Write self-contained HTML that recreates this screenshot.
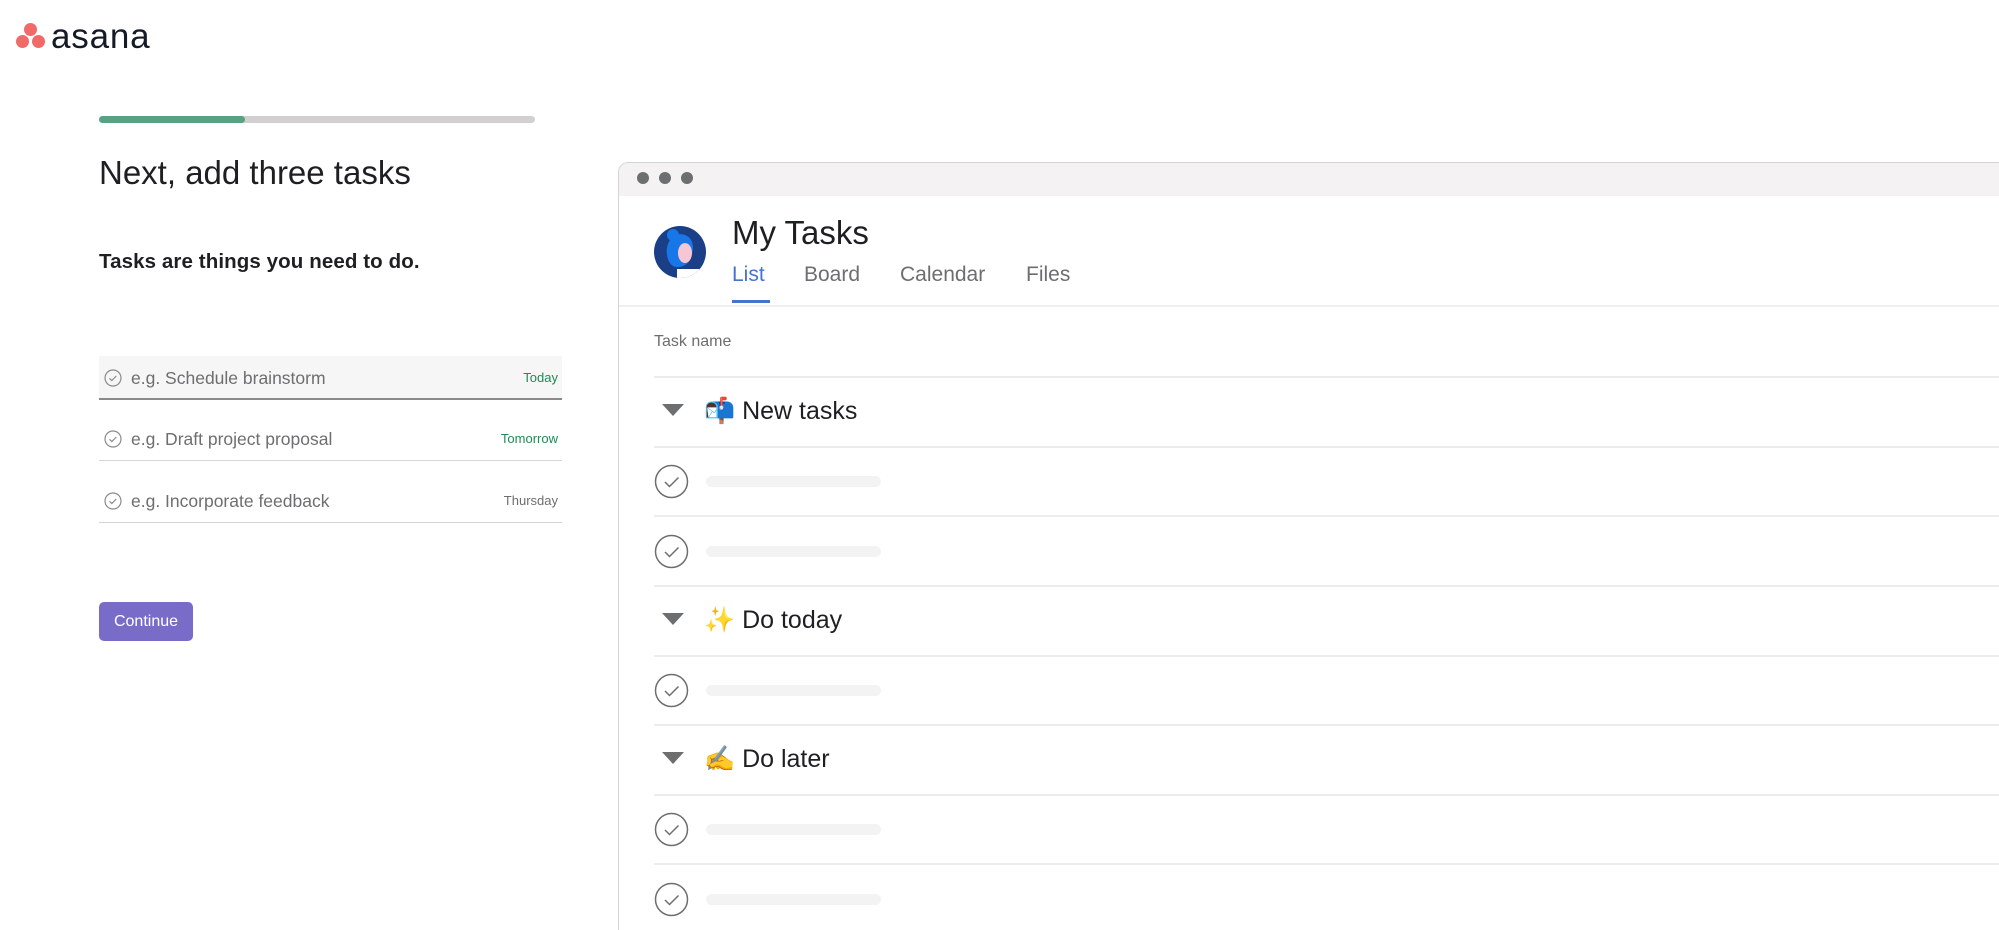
<!DOCTYPE html>
<html><head><meta charset="utf-8"><style>
*{margin:0;padding:0;box-sizing:border-box}
html,body{width:1999px;height:930px;overflow:hidden;background:#fff}
body{font-family:"Liberation Sans",sans-serif;color:#1e1f21}
#w{position:relative;width:1999px;height:930px;overflow:hidden}
.a{position:absolute}
.dot{position:absolute;width:13px;height:13px;border-radius:50%;background:#f06a6a}
.row{position:absolute;left:99px;width:463px;height:44px;border-bottom:1px solid #d5d5d5}
.row .t{position:absolute;left:32px;top:12px;font-size:17.5px;color:#6d6e6f}
.row .r{position:absolute;right:4px;top:14px;font-size:13px}
.row svg{position:absolute;left:5px;top:13px}
.hl{position:absolute;left:654px;right:0;height:2px;background:#ececec}
.sec{position:absolute;left:662px;font-size:25px;color:#1e1f21}
.tri{display:inline-block;width:0;height:0;border-left:11px solid transparent;border-right:11px solid transparent;border-top:12px solid #6d6e6f;vertical-align:middle;margin-right:20px;position:relative;top:-2px}
.chk{position:absolute;left:654px}
.ph{position:absolute;left:706px;width:175px;height:11px;border-radius:6px;background:#f3f3f3}
</style></head><body><div id="w">
<div class="dot" style="left:24px;top:23px"></div>
<div class="dot" style="left:16px;top:35px"></div>
<div class="dot" style="left:32px;top:35px"></div>
<div class="a" style="left:51px;top:17px;font-size:35px;letter-spacing:0.8px;color:#151b26">asana</div>

<div class="a" style="left:99px;top:116px;width:436px;height:7px;border-radius:4px;background:#d1cfcf"></div>
<div class="a" style="left:99px;top:116px;width:146px;height:7px;border-radius:4px;background:#58a182"></div>
<div class="a" style="left:99px;top:154px;font-size:33px;color:#1e1f21">Next, add three tasks</div>
<div class="a" style="left:99px;top:250px;font-size:20.5px;font-weight:bold;color:#1e1f21;letter-spacing:0.1px">Tasks are things you need to do.</div>

<div class="row" style="top:356px;background:#f6f6f6;border-bottom:2px solid #8a8a8a"><svg width="18" height="18" viewBox="0 0 18 18"><circle cx="9" cy="9" r="8" fill="none" stroke="#8a8a8a" stroke-width="1.2"/><path d="M5.5 9.3l2.3 2.2 4.5-4.5" fill="none" stroke="#8a8a8a" stroke-width="1.2"/></svg><span class="t">e.g. Schedule brainstorm</span><span class="r" style="color:#1f8a55">Today</span></div>
<div class="row" style="top:417px"><svg width="18" height="18" viewBox="0 0 18 18"><circle cx="9" cy="9" r="8" fill="none" stroke="#8a8a8a" stroke-width="1.2"/><path d="M5.5 9.3l2.3 2.2 4.5-4.5" fill="none" stroke="#8a8a8a" stroke-width="1.2"/></svg><span class="t">e.g. Draft project proposal</span><span class="r" style="color:#1f8a55">Tomorrow</span></div>
<div class="row" style="top:479px"><svg width="18" height="18" viewBox="0 0 18 18"><circle cx="9" cy="9" r="8" fill="none" stroke="#8a8a8a" stroke-width="1.2"/><path d="M5.5 9.3l2.3 2.2 4.5-4.5" fill="none" stroke="#8a8a8a" stroke-width="1.2"/></svg><span class="t">e.g. Incorporate feedback</span><span class="r" style="color:#6d6e6f">Thursday</span></div>

<div class="a" style="left:99px;top:602px;width:94px;height:39px;border-radius:5px;background:#796cc9;color:#fff;font-size:16px;text-align:center;line-height:39px">Continue</div>

<div class="a" style="left:618px;top:162px;width:1381px;height:768px;border:1.5px solid #d5d3d4;border-right:none;border-bottom:none;border-top-left-radius:10px;background:#fff;overflow:hidden">
 <div style="height:33px;background:#f4f2f3"></div>
</div>
<div class="a" style="left:637px;top:172px;width:12px;height:12px;border-radius:50%;background:#6d6e6f"></div>
<div class="a" style="left:659px;top:172px;width:12px;height:12px;border-radius:50%;background:#6d6e6f"></div>
<div class="a" style="left:681px;top:172px;width:12px;height:12px;border-radius:50%;background:#6d6e6f"></div>

<svg class="a" style="left:653px;top:225px" width="54" height="54" viewBox="0 0 54 54"><defs><clipPath id="c"><circle cx="27" cy="27" r="26"/></clipPath></defs><g clip-path="url(#c)"><rect width="54" height="54" fill="#1a3f86"/><path d="M14 30c-2-14 8-24 18-20 8 3 10 12 6 22-2 6-6 10-14 10-6 0-9-6-10-12z" fill="#1877e8"/><circle cx="20" cy="10" r="6" fill="#1877e8"/><ellipse cx="32" cy="28" rx="7" ry="10" fill="#f7c6d3"/><rect x="24" y="44" width="22" height="12" fill="#fff"/></g></svg>
<div class="a" style="left:732px;top:214px;font-size:33px;color:#1e1f21">My Tasks</div>
<div class="a" style="left:732px;top:263px;font-size:21px;color:#4573d2">List</div>
<div class="a" style="left:804px;top:263px;font-size:21px;color:#6d6e6f">Board</div>
<div class="a" style="left:900px;top:263px;font-size:21px;color:#6d6e6f">Calendar</div>
<div class="a" style="left:1026px;top:263px;font-size:21px;color:#6d6e6f">Files</div>
<div class="a" style="left:732px;top:300px;width:38px;height:3px;background:#4573d2"></div>
<div class="a" style="left:619px;top:305px;right:0;height:2px;background:#efefef"></div>
<div class="a" style="left:654px;top:333px;font-size:16px;color:#6d6e6f">Task name</div>

<div class="hl" style="top:376px"></div>
<div class="sec" style="top:397px"><span class="tri"></span>📬 New tasks</div>
<div class="hl" style="top:446px"></div>
<svg class="chk" style="top:464px" width="35" height="35" viewBox="0 0 35 35"><circle cx="17.5" cy="17.5" r="16" fill="none" stroke="#6d6e6f" stroke-width="1.5"/><path d="M11 18l4.5 4.5 9-9" fill="none" stroke="#6d6e6f" stroke-width="1.5"/></svg><div class="ph" style="top:476px"></div>
<div class="hl" style="top:515px"></div>
<svg class="chk" style="top:534px" width="35" height="35" viewBox="0 0 35 35"><circle cx="17.5" cy="17.5" r="16" fill="none" stroke="#6d6e6f" stroke-width="1.5"/><path d="M11 18l4.5 4.5 9-9" fill="none" stroke="#6d6e6f" stroke-width="1.5"/></svg><div class="ph" style="top:546px"></div>
<div class="hl" style="top:585px"></div>
<div class="sec" style="top:606px"><span class="tri"></span>✨ Do today</div>
<div class="hl" style="top:655px"></div>
<svg class="chk" style="top:673px" width="35" height="35" viewBox="0 0 35 35"><circle cx="17.5" cy="17.5" r="16" fill="none" stroke="#6d6e6f" stroke-width="1.5"/><path d="M11 18l4.5 4.5 9-9" fill="none" stroke="#6d6e6f" stroke-width="1.5"/></svg><div class="ph" style="top:685px"></div>
<div class="hl" style="top:724px"></div>
<div class="sec" style="top:745px"><span class="tri"></span>✍️ Do later</div>
<div class="hl" style="top:794px"></div>
<svg class="chk" style="top:812px" width="35" height="35" viewBox="0 0 35 35"><circle cx="17.5" cy="17.5" r="16" fill="none" stroke="#6d6e6f" stroke-width="1.5"/><path d="M11 18l4.5 4.5 9-9" fill="none" stroke="#6d6e6f" stroke-width="1.5"/></svg><div class="ph" style="top:824px"></div>
<div class="hl" style="top:863px"></div>
<svg class="chk" style="top:882px" width="35" height="35" viewBox="0 0 35 35"><circle cx="17.5" cy="17.5" r="16" fill="none" stroke="#6d6e6f" stroke-width="1.5"/><path d="M11 18l4.5 4.5 9-9" fill="none" stroke="#6d6e6f" stroke-width="1.5"/></svg><div class="ph" style="top:894px"></div>
</div></body></html>
